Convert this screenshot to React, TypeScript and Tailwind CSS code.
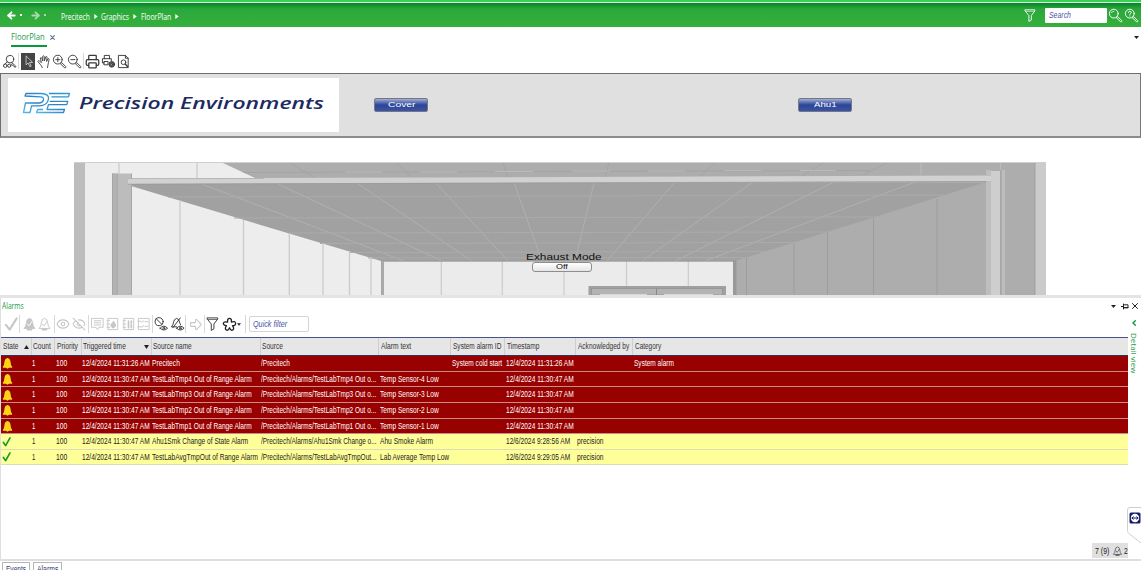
import { useLayoutEffect, useRef, useState, type ReactNode } from 'react';
import { ArrowLeft, ArrowRight, ArrowBigRight, Eye, EyeOff, Printer } from 'lucide-react';

/* Text set to an exact width by scaling horizontally. */
function Fit({ w, children, className = '' }: { w: number; children: string; className?: string }) {
  const ref = useRef<HTMLSpanElement>(null);
  const [scale, setScale] = useState(1);
  useLayoutEffect(() => {
    if (ref.current) setScale(w / ref.current.offsetWidth);
  }, [w, children]);
  return (
    <span className={`inline-block whitespace-nowrap text-left ${className}`} style={{ width: w }}>
      <span ref={ref} className="inline-block origin-left" style={{ transform: `scaleX(${scale})` }}>
        {children}
      </span>
    </span>
  );
}

function Svg({ children, className = '', box = '0 0 16 16' }: { children: ReactNode; className?: string; box?: string }) {
  return (
    <svg viewBox={box} fill="none" stroke="currentColor" strokeWidth="1" strokeLinejoin="round" strokeLinecap="round" className={`block shrink-0 ${className}`}>
      {children}
    </svg>
  );
}

const Magnifier = ({ mark, className }: { mark: 'plus' | 'minus' | 'none' | 'help'; className: string }) => (
  <Svg className={className}>
    <circle cx="6.2" cy="6" r="4.7" />
    <path d="M9.3 10.2l1.1-1 4.2 4.2q.5.6-.1 1.2t-1.2 0z" />
    {mark === 'plus' && <path d="M4 6h4.4M6.2 3.8v4.4" />}
    {mark === 'minus' && <path d="M4 6h4.4" />}
    {mark === 'none' && <path d="M3.6 5q.8-1.6 2.6-1.6" strokeWidth=".8" />}
    {mark === 'help' && <path d="M4.8 4.8q0-1.4 1.4-1.4t1.5 1.3c0 1-1.5 1.2-1.5 2.2M6.2 8.4v.2" />}
  </Svg>
);

const Funnel = ({ className }: { className: string }) => (
  <Svg className={className}>
    <path d="M2.5 1.5h11v1.3L9.5 8v5.2l-2.8 1.6V8L2.500 2.800z" />
    <path d="M3 3.200h10" strokeWidth=".7" />
  </Svg>
);

const bellPath = 'M2.500 12.500q2-2 2.200-6Q5 2.400 8 2q3 .4 3.300 4.500.2 4 2.200 6z';

function PrintGear() {
  return (
    <Svg className="h-[15px] w-[15px] text-[#333]">
      <path d="M3.500 5V1.500h5.500V5M3.500 9.500H1.500V5H11v2M3.500 8h4v3.500h-4z" />
      <circle cx="11.500" cy="11" r="3" fill="#666" />
      <circle cx="11.500" cy="11" r="1" fill="#fff" />
    </Svg>
  );
}

const Sep = ({ className }: { className: string }) => <span className={`w-px shrink-0 bg-[#d9d9d9] ${className}`} />;
const Box = ({ children, className }: { children: ReactNode; className: string }) => (
  <span className={`flex shrink-0 items-center justify-center ${className}`}>{children}</span>
);

const Crumb = ({ w, children }: { w: number; children: string }) => (
  <span className="flex items-center">
    <Fit w={w}>{children}</Fit>
    <Svg box="0 0 4 6" className="ml-1 h-[5px] w-[4px] -translate-y-px">
      <path d="M0 0L4 3L0 6z" fill="#fff" stroke="none" />
    </Svg>
  </span>
);

function TopBar() {
  return (
    <header className="shrink-0">
      <div className="h-[2px] bg-[#3fce57]" />
      <div className="h-px bg-[#d9f5dc]" />
      <div className="flex h-[24px] items-center bg-linear-to-b from-[#00842b] via-[#2aa83b] via-25% to-[#35b03d] font-['Open_Sans',sans-serif] text-[8.500px] text-white">
        <ArrowLeft className="ml-[6px] h-[11px] w-[11px]" strokeWidth={4} />
        <span className="ml-[3px] h-[2px] w-[2px] bg-white" />
        <ArrowRight className="ml-[8px] h-[11px] w-[11px] text-[#a9d9ae]" strokeWidth={4} />
        <span className="ml-[3px] h-[2px] w-[2px] bg-[#a9d9ae]" />
        <nav className="ml-[14.500px] flex gap-[3.500px] pt-[5px]">
          <Crumb w={29}>Precitech</Crumb>
          <Crumb w={28}>Graphics</Crumb>
          <Crumb w={30}>FloorPlan</Crumb>
        </nav>
        <div className="ml-auto flex items-center">
          <Funnel className="mr-[8.500px] h-[15px] w-[14px]" />
          <div className="flex h-[15px] w-[62px] items-center rounded-[1px] bg-white pl-[4px] font-['Liberation_Sans',sans-serif] text-[8.500px] italic text-[#4a54a8]">
            <Fit w={22}>Search</Fit>
          </div>
          <Magnifier mark="none" className="ml-px h-[15px] w-[15px]" />
          <Magnifier mark="help" className="ml-px mr-[2px] h-[15px] w-[15px]" />
        </div>
      </div>
    </header>
  );
}

function TabStrip() {
  return (
    <div className="flex h-[24px] shrink-0 items-start justify-between pl-[11px] pr-[2px]">
      <div className="flex">
        <div className="flex h-[20px] w-[36px] items-center border-b-2 border-[#079a38] pt-[2px] font-['Open_Sans',sans-serif] text-[9px] text-[#1d9a42]">
          <Fit w={34}>FloorPlan</Fit>
        </div>
        <Svg box="0 0 6 6" className="ml-[3px] mt-[8px] h-[5px] w-[5px] text-[#56739b]">
          <path d="M.8.8l4.400 4.400M5.200.8L.8 5.200" strokeWidth="1.300" />
        </Svg>
      </div>
      <Svg box="0 0 5 3" className="mt-[9px] h-[3px] w-[5px]">
        <path d="M0 0h5L2.500 3z" fill="#222" stroke="none" />
      </Svg>
    </div>
  );
}

function GraphicsToolbar() {
  return (
    <div className="flex h-[22px] shrink-0 items-center pb-[2px] pl-[2px] text-[#3a3a3a]">
      <Box className="w-[15px]">
        <Svg className="h-[15px] w-[15px]">
          <circle cx="8.500" cy="5.500" r="4" />
          <path d="M5.500 8.500L1.800 12M10 8.800l4.500 4q.6 1-.3 1.400l-4-3" />
          <circle cx="3.500" cy="12.500" r="1.900" />
          <circle cx="7.700" cy="12.500" r="1.700" />
        </Svg>
      </Box>
      <Sep className="ml-px h-[16px]" />
      <Box className="ml-[2px] h-[17px] w-[14px] bg-[#454545] text-[#d5d5d5]">
        <Svg className="h-[15px] w-[13px]">
          <path d="M5 1.500v10.700l2.500-2.400 2.200 4.700 1.600-.8-2.100-4.500h3.400z" />
        </Svg>
      </Box>
      <Box className="ml-[1.500px] w-[15px]">
        <Svg className="h-[15px] w-[14px]">
          <path d="M6 15q-.5-2-2.500-4L1 8q.3-1.500 1.800-.6L5 9.300 3.800 4q.9-1.300 1.700 0L6.700 7.500 6.500 2q.9-1.200 1.700 0l.4 5.300L10 2.500q1.200-.8 1.500.4L11 8l1.500-3.200q1.300-.5 1.300.8-.6 3.400-1.300 6.400l-.5 3" />
        </Svg>
      </Box>
      <Box className="w-[15px]"><Magnifier mark="plus" className="h-[15px] w-[15px]" /></Box>
      <Box className="w-[15px]"><Magnifier mark="minus" className="h-[15px] w-[15px]" /></Box>
      <Sep className="ml-[1.500px] h-[16px]" />
      <Box className="ml-px w-[15px]"><Printer className="h-[15px] w-[15px]" strokeWidth={2} /></Box>
      <Box className="ml-[.5px] w-[15px]"><PrintGear /></Box>
      <Box className="ml-[.5px] w-[15px]">
        <Svg className="h-[15px] w-[15px]">
          <path d="M3 1.500h7l3 3v10H3zM10 1.500v3h3" />
          <circle cx="8" cy="8.800" r="2.500" />
          <path d="M9.800 10.600l2.700 3" strokeWidth="1.500" />
        </Svg>
      </Box>
    </div>
  );
}

const BannerButton = ({ w, children, className }: { w: number; children: string; className: string }) => (
  <button className={`flex h-[14px] w-[54px] items-center justify-center rounded-[2px] border border-[#77777f] bg-linear-to-b from-[#a3aed6] via-[#2d4496] via-50% to-[#3c54a8] font-['Liberation_Sans',sans-serif] text-[8px] leading-none text-white ${className}`}>
    <Fit w={w}>{children}</Fit>
  </button>
);

function Banner() {
  return (
    <div className="flex h-[65px] shrink-0 items-center border border-b-2 border-[#6e6e6e] border-b-[#8c8c8c] border-r-[#777] bg-[#e0e0e0]">
      <div className="ml-[7px] flex h-[54px] w-[331px] items-center bg-white pb-[5px] pl-[14px]">
        <svg viewBox="0 0 49 22" className="block h-[22px] w-[49px]" fill="none" strokeWidth="1.300" strokeLinejoin="round">
          <defs>
            <linearGradient id="pe" x1="0" y1="1" x2="1" y2="0">
              <stop offset="0" stopColor="#55b9e6" />
              <stop offset=".5" stopColor="#2b7fc4" />
              <stop offset="1" stopColor="#2f9fdc" />
            </linearGradient>
          </defs>
          <path d="M3 4l1-2.500h15q8.500.5 7.500 5.500-1 6.500-9 6.800H9.500L8 20.500H1.500L3.500 11h14q3.500-.3 4-3.300.4-2.700-3-2.900z" stroke="url(#pe)" />
          <path d="M27 1.500h20.500L46.500 4.800H29.500M27.800 9.300h18l-1 3.300H26.500L25 17.500h17.500l-1 3H14.500l1.200-3H21" stroke="url(#pe)" />
        </svg>
        <Fit w={245} className="ml-[8px] font-['Open_Sans',sans-serif] text-[15.500px] font-semibold italic leading-[20px] text-[#1b2b62]">Precision Environments</Fit>
      </div>
      <BannerButton w={27} className="ml-[35px]">Cover</BannerButton>
      <BannerButton w={23} className="ml-[370px]">Ahu1</BannerButton>
    </div>
  );
}

const ceilingSeams = [
  [202, 184, 404, 261], [278, 184, 442, 261], [357, 183, 472, 261], [436, 183, 508, 261], [514, 183, 542, 261],
  [594, 183, 575, 261], [674, 183, 607, 261], [753, 182, 642, 261], [834, 182, 675, 261], [915, 182, 705, 261],
];
const ceilingRows = [[168, 197, 948, 195], [234, 218, 877, 217], [288, 233, 828, 232], [320, 243.500, 794, 242.500], [350, 252.500, 765, 251.500], [368, 258, 746, 257.500]];
const upperSeams = [[290, 163, 315, 178], [397, 163, 411, 177], [503, 163, 508, 177], [609, 163, 605, 177], [715, 163, 700, 176], [823, 163, 802, 176], [887, 163, 863, 175]];
const leftSeams = [[119, 163, 173], [197, 163, 178], [180, 200, 295], [243.500, 220, 295], [289.300, 233, 295], [323, 243, 295], [349.500, 251, 295], [371, 257, 295]];
const rightSeams = [[746.500, 258], [794, 243], [827.500, 232], [873.500, 218], [937, 199]];
const backSeams = [441.300, 502.300, 564, 626.500, 688.300];

function FloorDrawing() {
  return (
    <svg viewBox="74 162 972 133" className="block h-[133px] w-[972px]">
      <rect x="74" y="162" width="972" height="133" fill="#ededed" />
      <rect x="74" y="163" width="11" height="132" fill="#bdbdbd" />
      <path d="M223 163H1046V295H735V261L300 200L255 178z" fill="#adadad" />
      <path d="M131 186L128 183H986V182L735 261H381z" fill="#a1a1a1" />
      <g stroke="#b0b0b0" strokeWidth="1">
        {ceilingSeams.map(([a, b, c, d]) => <line key={a} x1={a} y1={b} x2={c} y2={d} />)}
        {ceilingRows.map(([a, b, c, d]) => <line key={b} x1={a} y1={b} x2={c} y2={d} stroke="#ababab" />)}
      </g>
      <g stroke="#a2a2a2" strokeWidth=".8">
        {upperSeams.map(([a, b, c, d]) => <line key={a} x1={a} y1={b} x2={c} y2={d} />)}
        <path d="M243 172.500L870 170.500" />
      </g>
      <path d="M345 172h37M420 172h37M495 171.500h38M572 171h38M648 171h37M724 170.500h37M800 170.500h36" stroke="#b9b9b9" />
      <g stroke="#cbcbcb" strokeWidth="1.300">
        {leftSeams.map(([x, a, b]) => <line key={x} x1={x} y1={a} x2={x} y2={b} />)}
      </g>
      <g stroke="#9d9d9d" strokeWidth="1">
        {rightSeams.map(([x, a]) => <line key={x} x1={x} y1={a} x2={x} y2={295} />)}
      </g>
      <path d="M921 163v12M1000.500 163v8" stroke="#bcbcbc" />
      <rect x="381" y="261" width="354" height="34" fill="#ebebeb" />
      <g stroke="#cbcbcb" strokeWidth="1.200">
        {backSeams.map((x) => <line key={x} x1={x} y1={261} x2={x} y2={295} />)}
      </g>
      <path d="M381 261.300H735" stroke="#939393" strokeWidth=".8" />
      <rect x="381" y="261" width="3" height="34" fill="#a9a9a9" />
      <rect x="733" y="260" width="3.500" height="35" fill="#999" />
      <rect x="588.500" y="286" width="137.500" height="9" fill="#a0a0a0" />
      <rect x="591.500" y="288.500" width="131" height="6.500" fill="#b3b3b3" stroke="#909090" strokeWidth=".7" />
      <path d="M656.500 288.500V295" stroke="#888" />
      <path d="M600 294.500h47M664 294.500h49" stroke="#d5dbdb" />
      <rect x="112" y="173.500" width="20" height="121.500" fill="#bcbcbc" />
      <rect x="112" y="173.500" width="5" height="121.500" fill="#b3b3b3" />
      <path d="M112.500 173.500V295M117.300 173.500V295M131.500 173.500V295" stroke="#a2a2a2" strokeWidth=".8" />
      <path d="M128 178.500L990 175.500V181.300L128 184z" fill="#d1d1d1" />
      <path d="M128 184.200L988 181.500" stroke="#989898" strokeWidth=".7" />
      <path d="M128 178.500H264" stroke="#aaa" strokeWidth=".7" />
      <rect x="986" y="170" width="5" height="125" fill="#bebebe" />
      <rect x="991" y="171" width="9.500" height="124" fill="#cecece" />
      <rect x="1000.500" y="170" width="1" height="125" fill="#8f8f8f" />
      <rect x="1001.500" y="170" width="3.500" height="125" fill="#bdbdbd" />
      <path d="M986 176H991V181H986z" fill="#d1d1d1" />
      <rect x="1035" y="163" width="11" height="132" fill="#cbcbcb" />
      <path d="M1035 163V295" stroke="#9a9a9a" strokeWidth=".8" />
      <path d="M74 162.500H1046" stroke="#cfcfcf" />
    </svg>
  );
}

function FloorPlan() {
  return (
    <div className="relative flex h-[157px] shrink-0 items-end pl-[74px]">
      <FloorDrawing />
      <div className="absolute left-[526px] top-[114px] flex w-[76px] flex-col font-['Liberation_Sans',sans-serif] leading-none text-[#111]">
        <Fit w={76} className="h-[10px] text-[9.500px]">Exhaust Mode</Fit>
        <span className="ml-[5.500px] flex h-[10px] w-[60px] items-center justify-center rounded-[3px] border border-[#8d8d8d] bg-linear-to-b from-white to-[#e6e6e6] text-[7.500px]">
          <Fit w={12}>Off</Fit>
        </span>
      </div>
    </div>
  );
}

const listFrame = 'M3.500 2h10v12h-10zM2 4.500h3M2 8h3M2 11.500h3';

function AlarmToolbar() {
  const icon = 'h-[16px] w-[15px]';
  return (
    <div className="flex h-[24px] shrink-0 items-center pb-[2px] pl-[2px] text-[#c6c6c6]">
      <Box className="w-[16px]">
        <Svg className={icon}><path d="M2 9l4 5L13.500 2" strokeWidth="2.200" /></Svg>
      </Box>
      <Sep className="h-[18px]" />
      <Box className="ml-[1.500px] w-[15px]">
        <Svg className={icon}><path d={bellPath} fill="#c6c6c6" /><path d="M6 14h4" strokeWidth="2" /><path d="M5.800 8l1.700 2 3-4.500" stroke="#fff" /></Svg>
      </Box>
      <Box className="w-[15.500px]">
        <Svg className={icon}><path d={bellPath} /><path d="M6 14h4" strokeWidth="2" /><path d="M5.800 8l1.700 2 3-4.500" /></Svg>
      </Box>
      <Sep className="ml-[1.500px] h-[18px]" />
      <Box className="ml-px w-[15.500px]"><Eye className="h-[14px] w-[14px]" strokeWidth={2} /></Box>
      <Box className="w-[15.500px]"><EyeOff className="h-[14px] w-[14px]" strokeWidth={1.800} /></Box>
      <Sep className="ml-px h-[18px]" />
      <Box className="ml-px w-[15.500px]">
        <Svg className={icon}><path d="M2 2h12v9.500H9.500L8 14.200 6.500 11.500H2zM4.500 4.500h7M4.500 6.700h7M4.500 9h7" /></Svg>
      </Box>
      <Box className="w-[15.500px]">
        <Svg className={icon}><path d={listFrame} /><path d="M8.500 12q-2.500-.5-2.300-3 .2-1 1-1.500l.3 1 1.500-3.500q2.500 3 2.300 5-.2 1.700-2.800 2z" fill="#c6c6c6" /></Svg>
      </Box>
      <Box className="w-[15.500px]">
        <Svg className={icon}><path d={listFrame} /><path d="M8 5v7M11 5v2M11 9v3" strokeWidth="1.800" /></Svg>
      </Box>
      <Box className="w-[15.500px]">
        <Svg className={icon}><path d="M3 2h11v12H3zM2 5h3M2 11h3M5.500 5.500l1 1 1.500-2M9.500 5.500h3M5.500 10.500l1 1 1.500-2M9.500 10.500h3" /></Svg>
      </Box>
      <Sep className="h-[18px]" />
      <Box className="ml-px w-[16px] text-[#333]">
        <Svg className={icon}>
          <circle cx="5.500" cy="5.500" r="4.300" /><path d="M2.500 2.500l6 6" />
          <path d="M6.500 12.500q4-4.500 8 0-4 4-8 0z" /><circle cx="10.500" cy="12.500" r="1" />
        </Svg>
      </Box>
      <Box className="w-[15.500px] text-[#333]">
        <Svg className={icon}>
          <path d="M7 11H1.500q2-2 2.300-5T7 2q2.800.6 3.200 4 .2 1.500 1 2.700M11 1.500L3 12" />
          <path d="M7 12.500q4-4.500 8 0-4 4-8 0z" /><circle cx="11" cy="12.500" r="1" />
        </Svg>
      </Box>
      <Sep className="h-[18px]" />
      <Box className="ml-[2px] w-[15px]"><ArrowBigRight className="h-[15px] w-[15px]" strokeWidth={1.700} /></Box>
      <Sep className="ml-px h-[18px]" />
      <Box className="w-[15.500px] text-[#333]"><Funnel className="h-[16px] w-[15px]" /></Box>
      <Box className="ml-px w-[15px] text-[#222]">
        <Svg className="h-[15px] w-[15px]">
          <path d="M6 5.500Q5.500 1.500 8 1.500T10 5.500Q14 4 14.500 6.500T11.200 9.300Q13.500 12.500 11.500 13.800T8 11.500Q6.500 15 4.500 13.800T4.800 9.300Q1 8.500 1.500 6.500T6 5.500z" strokeWidth="1.400" />
        </Svg>
      </Box>
      <Svg box="0 0 5 3" className="ml-[.5px] h-[3px] w-[4px]"><path d="M0 0h5L2.500 3z" fill="#222" stroke="none" /></Svg>
      <Sep className="ml-[3.500px] h-[18px]" />
      <div className="ml-[3px] flex h-[16px] w-[60px] items-center rounded-[2px] border border-[#d2d5dc] pl-[3px] text-[8.500px] italic text-[#4a54a8]">
        <Fit w={34}>Quick filter</Fit>
      </div>
    </div>
  );
}

const grid = 'grid grid-cols-[30px_23px_27px_70px_108.500px_118.500px_72px_54px_71px_57px_1fr]';
const headers: [string, number][] = [
  ['State', 15.500], ['Count', 18], ['Priority', 20.500], ['Triggered time', 42.500], ['Source name', 39], ['Source', 21],
  ['Alarm text', 30], ['System alarm ID', 48.500], ['Timestamp', 32.500], ['Acknowledged by', 51.500], ['Category', 26.500],
];

type Cell = [string, number];
type Row = { red: boolean; time: string; name: Cell; source: Cell; text: Cell; sys: Cell; stamp: Cell; by: Cell; cat: Cell };
const none: Cell = ['', 0];
const temp = (n: number): Row => ({
  red: true, time: '12/4/2024 11:30:47 AM', name: [`TestLabTmp${n} Out of Range Alarm`, 100],
  source: [`/Precitech/Alarms/TestLabTmp${n} Out o...`, 115.500], text: [`Temp Sensor-${n} Low`, 59],
  sys: none, stamp: ['12/4/2024 11:30:47 AM', 67.500], by: none, cat: none,
});
const rows: Row[] = [
  { red: true, time: '12/4/2024 11:31:26 AM', name: ['Precitech', 27.500], source: ['/Precitech', 29], text: none, sys: ['System cold start', 50], stamp: ['12/4/2024 11:31:26 AM', 67.500], by: none, cat: ['System alarm', 40] },
  temp(4), temp(3), temp(2), temp(1),
  { red: false, time: '12/4/2024 11:30:47 AM', name: ['Ahu1Smk Change of State Alarm', 96.500], source: ['/Precitech/Alarms/Ahu1Smk Change o...', 115.500], text: ['Ahu Smoke Alarm', 53], sys: none, stamp: ['12/6/2024 9:28:56 AM', 64], by: ['precision', 26.500], cat: none },
  { red: false, time: '12/4/2024 11:30:47 AM', name: ['TestLabAvgTmpOut of Range Alarm', 106], source: ['/Precitech/Alarms/TestLabAvgTmpOut...', 115.500], text: ['Lab Average Temp Low', 69.500], sys: none, stamp: ['12/6/2024 9:29:05 AM', 64], by: ['precision', 26.500], cat: none },
];

function AlarmTable() {
  return (
    <div className="w-[1127px] text-[8.500px] leading-none">
      <div className={`${grid} h-[19px] border-y border-t-[#4b5287] border-b-[#34345c] bg-[#e6e6e6] text-[#333]`}>
        {headers.map(([label, w], i) => (
          <div
            key={label}
            className={`flex items-center ${i === 0 ? 'pl-[2px]' : i > 5 || i === 2 ? 'border-l border-[#cfcfcf] pl-[2px]' : 'border-l border-[#cfcfcf] pl-px'}`}
          >
            <Fit w={w}>{label}</Fit>
            {i === 0 && <Svg box="0 0 5 4" className="ml-[5px] h-[4px] w-[5px]"><path d="M0 4h5L2.500 0z" fill="#222" stroke="none" /></Svg>}
            {i === 3 && <Svg box="0 0 5 4" className="ml-auto mr-[2px] h-[4px] w-[5px]"><path d="M0 0h5L2.500 4z" fill="#222" stroke="none" /></Svg>}
          </div>
        ))}
      </div>
      {rows.map((r, i) => (
        <div
          key={i}
          className={`${grid} h-[15.650px] items-center border-b ${r.red ? 'border-[#c58d8d] bg-[#990000] text-white' : 'border-[#dcdcb8] bg-[#ffff99] text-[#222]'}`}
        >
          <div className="pl-[.5px]">
            {r.red ? (
              <Svg box="0 0 11 13" className="h-[12px] w-[11px]">
                <path d="M.5 10.500q1.500-1.500 1.700-5Q2.500 1.500 5.500 1q3 .5 3.300 4.500.2 3.500 1.700 5v1.200H7.200l-1.700.9-1.700-.9H.5z" fill="#ffd21a" stroke="none" />
              </Svg>
            ) : (
              <Svg box="0 0 11 13" className="h-[12px] w-[10px] text-[#0b9a35]"><path d="M1.500 7l2.500 3.500L8.800 2" strokeWidth="1.800" /></Svg>
            )}
          </div>
          <div className="pl-[1px]"><Fit w={3.500}>1</Fit></div>
          <div className="pl-[2px]"><Fit w={11}>100</Fit></div>
          <div className="pl-[.5px]"><Fit w={67.500}>{r.time}</Fit></div>
          {[r.name, r.source, r.text, r.sys, r.stamp, r.by, r.cat].map(([text, w], k) => (
            <div key={k} className={k < 2 ? 'pl-px' : 'pl-[2px]'}>{text && <Fit w={w}>{text}</Fit>}</div>
          ))}
        </div>
      ))}
    </div>
  );
}

function AlarmsPane() {
  return (
    <section className="relative flex h-[266px] shrink-0 flex-col border-b-2 border-l border-t-3 border-[#dfdfdf] border-t-[#e4e4e4] font-['Liberation_Sans',sans-serif]">
      <div className="flex h-[15px] shrink-0 items-center justify-between pl-px pr-[3px] pt-px">
        <Fit w={22} className="font-['Open_Sans',sans-serif] text-[8.500px] leading-none text-[#1d9a42]">Alarms</Fit>
        <div className="flex items-center text-[#222]">
          <Svg box="0 0 5 3" className="h-[3px] w-[5px]"><path d="M0 0h5L2.500 3z" fill="#222" stroke="none" /></Svg>
          <Svg box="0 0 8 7" className="ml-[5px] h-[7px] w-[8px]"><path d="M0 3.500h2.500M2.500 1v5M2.500 1.800h4.500v3H2.500M2.500 4.600h4.500" /></Svg>
          <Svg box="0 0 6 6" className="ml-[3px] h-[6px] w-[6px]"><path d="M.5.5l5 5M5.500.5l-5 5" /></Svg>
        </div>
      </div>
      <AlarmToolbar />
      <AlarmTable />
      <aside className="absolute right-0 top-[22px] flex w-[14px] flex-col items-center text-[#1d9a42]">
        <Svg box="0 0 4 6" className="h-[6px] w-[4px]"><path d="M3.300.8L1 3l2.300 2.200" strokeWidth="1.500" /></Svg>
        <span className="mt-[7px] font-['Open_Sans',sans-serif] text-[8px] font-medium leading-[9px] [writing-mode:vertical-rl]">Detail view</span>
      </aside>
      <div className="absolute bottom-[1px] right-[13px] flex h-[15px] w-[36px] items-center bg-[#e0e0e0] pl-[3px] pt-px text-[8.500px] text-[#222]">
        <Fit w={14}>7 (9)</Fit>
        <Svg className="ml-[2.500px] h-[12px] w-[11px] text-[#444]"><path d={bellPath} /><path d="M6 14h4" strokeWidth="2" /><path d="M5.800 8l1.700 2 3-4.500" /></Svg>
        <Fit w={4} className="ml-px">2</Fit>
      </div>
      <div className="absolute bottom-[15px] right-0 h-[37px] w-[14px]">
        <Svg box="0 0 14 37" className="h-[37px] w-[14px]">
          <path d="M14 .5H3Q.5.500.5 3v20.500q0 2 2 3.500L14 36" fill="#fff" stroke="#cfcfcf" />
          <rect x="2.500" y="5.500" width="11" height="11" rx="1.500" fill="#171c68" stroke="none" />
          <circle cx="8" cy="11" r="4.200" fill="#fff" stroke="none" />
          <path d="M5 11h6M6.300 9.800L5 11l1.300 1.200M9.700 9.800L11 11l-1.300 1.200" stroke="#171c68" />
        </Svg>
      </div>
    </section>
  );
}

export default function App() {
  return (
    <main className="flex h-[570px] w-[1141px] flex-col overflow-hidden bg-white">
      <TopBar />
      <TabStrip />
      <GraphicsToolbar />
      <Banner />
      <FloorPlan />
      <AlarmsPane />
      <footer className="flex h-[9px] shrink-0 gap-[3px] overflow-hidden pl-[2px] pt-px font-['Liberation_Sans',sans-serif] text-[8.500px] leading-none text-[#333a6b]">
        <div className="h-[16px] w-[28px] border border-[#b5b5b5] pl-[3px] pt-[2px]"><Fit w={20}>Events</Fit></div>
        <div className="h-[16px] w-[29px] border border-[#b5b5b5] pl-[3px] pt-[2px]"><Fit w={21}>Alarms</Fit></div>
      </footer>
    </main>
  );
}
